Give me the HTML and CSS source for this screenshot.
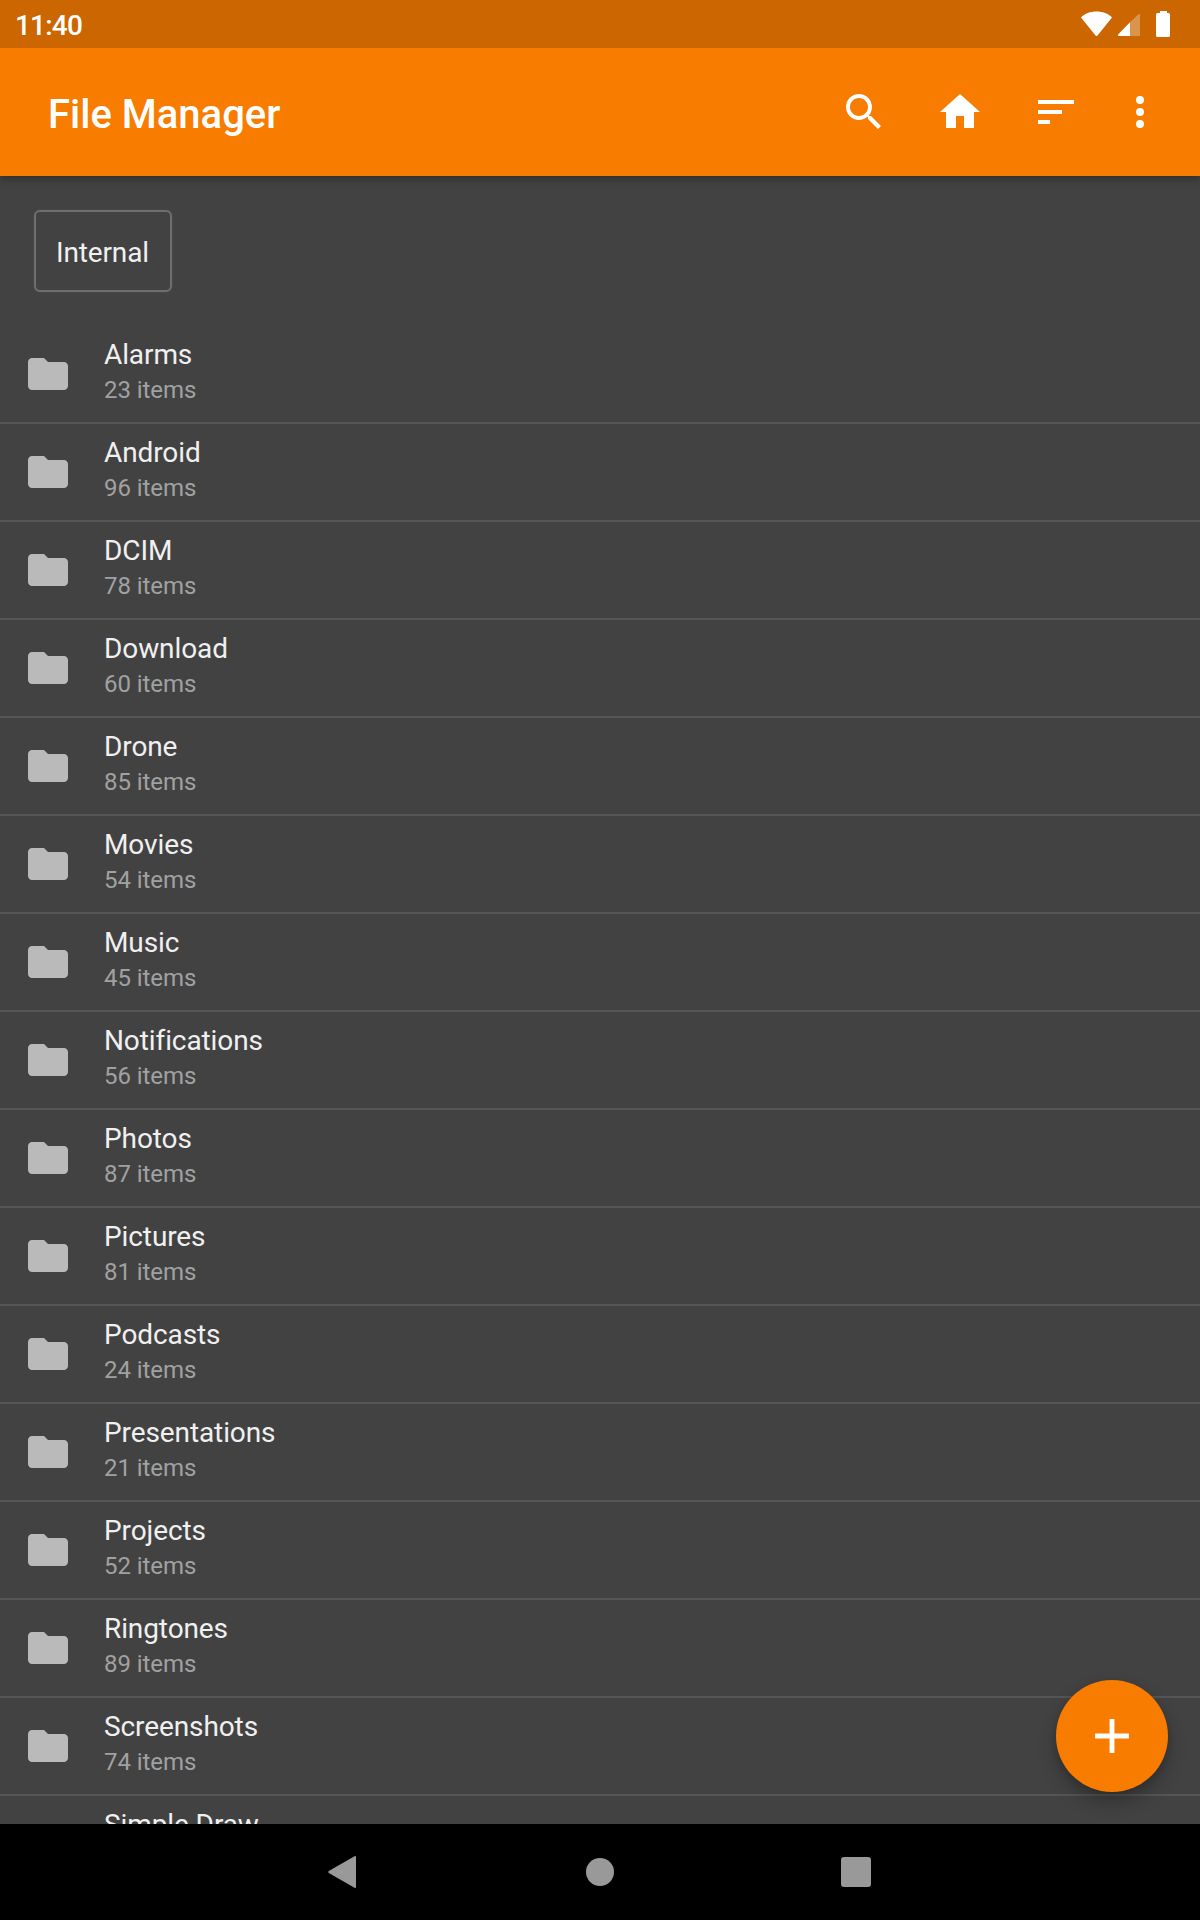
FILE: index.html
```html
<!DOCTYPE html>
<html lang="en">
<head>
<meta charset="utf-8">
<title>File Manager</title>
<link rel="stylesheet" href="styles.css">
</head>
<body>
<svg class="defs" width="0" height="0" aria-hidden="true">
  <symbol id="folder" viewBox="0 0 24 24"><path d="M10 4H4c-1.1 0-2 .9-2 2v12c0 1.100.9 2 2 2h16c1.100 0 2-.9 2-2V8c0-1.100-.9-2-2-2h-8z"/></symbol>
</svg>
<div class="screen">
  <header class="status-bar">
    <span class="clock">11:40</span>
    <svg class="status-icons" viewBox="0 0 96 48">
      <path d="M1 17.500C4.500 13.500 10.500 11.500 16.500 11.500S28.500 13.500 32 17.500L17.500 35.500Q16.500 36.500 15.500 35.500Z"/>
      <path class="faint" d="M50 22.300L58.500 14.300Q60 13.300 60 15V36H50Z"/>
      <path d="M50 22.300V36H39Q37 35.800 38.300 34.200Z"/>
      <path d="M80 11h7v2h1.500q1.500 0 1.500 1.500v21q0 1.500-1.500 1.500h-11q-1.500 0-1.500-1.500v-21q0-1.500 1.500-1.500h2.500z"/>
    </svg>
  </header>
  <div class="app-bar">
    <h1 class="title">File Manager</h1>
    <div class="actions">
      <svg class="icon" viewBox="0 0 24 24"><path d="M15.500 14h-.79l-.28-.27C15.410 12.590 16 11.110 16 9.500 16 5.910 13.090 3 9.500 3S3 5.910 3 9.500 5.910 16 9.500 16c1.610 0 3.090-.59 4.230-1.570l.27.28v.79l5 4.990L20.490 19l-4.990-5zm-6 0C7.010 14 5 11.990 5 9.500S7.010 5 9.500 5 14 7.010 14 9.500 11.990 14 9.500 14z"/></svg>
      <svg class="icon" viewBox="0 0 24 24"><path d="M10 20v-6h4v6h5v-8h3L12 3 2 12h3v8z"/></svg>
      <svg class="icon" viewBox="0 0 24 24"><path d="M3 18h6v-2H3v2zM3 6v2h18V6H3zm0 7h12v-2H3v2z"/></svg>
      <svg class="icon more" viewBox="0 0 24 24"><circle cx="12" cy="6" r="2"/><circle cx="12" cy="12" r="2"/><circle cx="12" cy="18" r="2"/></svg>
    </div>
  </div>
  <main class="content">
    <nav class="breadcrumbs"><span class="crumb">Internal</span></nav>
    <ul class="files">
      <li class="row"><svg class="icon"><use href="#folder"/></svg><div><div class="name">Alarms</div><div class="count">23 items</div></div></li>
      <li class="row"><svg class="icon"><use href="#folder"/></svg><div><div class="name">Android</div><div class="count">96 items</div></div></li>
      <li class="row"><svg class="icon"><use href="#folder"/></svg><div><div class="name">DCIM</div><div class="count">78 items</div></div></li>
      <li class="row"><svg class="icon"><use href="#folder"/></svg><div><div class="name">Download</div><div class="count">60 items</div></div></li>
      <li class="row"><svg class="icon"><use href="#folder"/></svg><div><div class="name">Drone</div><div class="count">85 items</div></div></li>
      <li class="row"><svg class="icon"><use href="#folder"/></svg><div><div class="name">Movies</div><div class="count">54 items</div></div></li>
      <li class="row"><svg class="icon"><use href="#folder"/></svg><div><div class="name">Music</div><div class="count">45 items</div></div></li>
      <li class="row"><svg class="icon"><use href="#folder"/></svg><div><div class="name">Notifications</div><div class="count">56 items</div></div></li>
      <li class="row"><svg class="icon"><use href="#folder"/></svg><div><div class="name">Photos</div><div class="count">87 items</div></div></li>
      <li class="row"><svg class="icon"><use href="#folder"/></svg><div><div class="name">Pictures</div><div class="count">81 items</div></div></li>
      <li class="row"><svg class="icon"><use href="#folder"/></svg><div><div class="name">Podcasts</div><div class="count">24 items</div></div></li>
      <li class="row"><svg class="icon"><use href="#folder"/></svg><div><div class="name">Presentations</div><div class="count">21 items</div></div></li>
      <li class="row"><svg class="icon"><use href="#folder"/></svg><div><div class="name">Projects</div><div class="count">52 items</div></div></li>
      <li class="row"><svg class="icon"><use href="#folder"/></svg><div><div class="name">Ringtones</div><div class="count">89 items</div></div></li>
      <li class="row"><svg class="icon"><use href="#folder"/></svg><div><div class="name">Screenshots</div><div class="count">74 items</div></div></li>
      <li class="row"><svg class="icon"><use href="#folder"/></svg><div><div class="name">Simple Draw</div></div></li>
    </ul>
    <div class="fab"><svg class="plus" viewBox="0 0 24 24"><path d="M19 13h-6v6h-2v-6H5v-2h6V5h2v6h6z"/></svg></div>
  </main>
  <footer class="nav-bar">
    <svg class="nav-icon" viewBox="0 0 32 32"><path d="M26.500 .3Q28 -.4 28 1.300V30.700Q28 32.400 26.500 31.700L.8 17Q-.6 16 .8 15Z"/></svg>
    <svg class="nav-icon" viewBox="0 0 32 32"><circle cx="16" cy="16" r="14"/></svg>
    <svg class="nav-icon" viewBox="0 0 32 32"><rect x="1" y="1" width="30" height="30" rx="3"/></svg>
  </footer>
</div>
</body>
</html>
```
FILE: styles.css
```css
* { box-sizing: border-box; }
body { margin: 0; background: #000; font-family: Roboto, sans-serif; }
.defs { display: none; }
.screen { display: flex; flex-direction: column; width: 1200px; height: 1920px; overflow: hidden; }

.status-bar { position: relative; z-index: 2; display: flex; justify-content: space-between; height: 48px; padding: 0 24px 0 15px; background: #cb6600; }
.clock { padding-top: 10px; color: #fff; font-size: 28px; font-weight: 500; line-height: 32px; letter-spacing: -0.8px; }
.status-icons { width: 96px; height: 48px; fill: #fff; }
.faint { opacity: .3; }

.app-bar { position: relative; z-index: 1; display: flex; justify-content: space-between; align-items: center; height: 128px; padding: 0 36px 0 48px; background: #f77c00; box-shadow: 0 3px 8px rgba(0, 0, 0, .3); }
.title { margin: 0; padding-top: 6px; color: #fff; font-size: 40px; font-weight: 500; line-height: 48px; }
.actions { display: flex; gap: 48px; fill: #fff; }
.icon { display: block; flex: none; width: 48px; height: 48px; }
.more { margin-left: -12px; }

.content { position: relative; flex: 1; min-height: 0; overflow: hidden; background: #424242; }
.breadcrumbs { display: flex; height: 150px; padding: 34px; }
.crumb { height: 82px; padding: 25px 21px 0 20px; border: 2px solid #6e6e6e; border-radius: 6px; color: #f0f0f0; font-size: 28px; line-height: 32px; letter-spacing: -0.15px; box-shadow: 0 0 1px #6e6e6e; }
.files { margin: 0; padding: 0; list-style: none; }
.row { display: flex; gap: 32px; height: 98px; padding: 13px 24px 0; border-bottom: 2px solid #555; }
.row .icon { margin-top: 11px; fill: #bababa; }
.name { color: #f0f0f0; font-size: 28px; line-height: 32px; letter-spacing: -0.1px; }
.count { margin-top: 5px; color: #a1a1a1; font-size: 24px; line-height: 28px; letter-spacing: -0.05px; }

.fab { position: absolute; right: 32px; bottom: 32px; display: flex; align-items: center; justify-content: center; width: 112px; height: 112px; border-radius: 50%; background: #f77c00; box-shadow: 0 10px 18px rgba(0, 0, 0, .25), 0 2px 6px rgba(0, 0, 0, .12); }
.plus { width: 58px; height: 58px; fill: #fff; }

.nav-bar { display: flex; justify-content: center; align-items: center; gap: 224px; height: 96px; fill: #999; }
.nav-icon { width: 32px; height: 32px; overflow: visible; }
```
